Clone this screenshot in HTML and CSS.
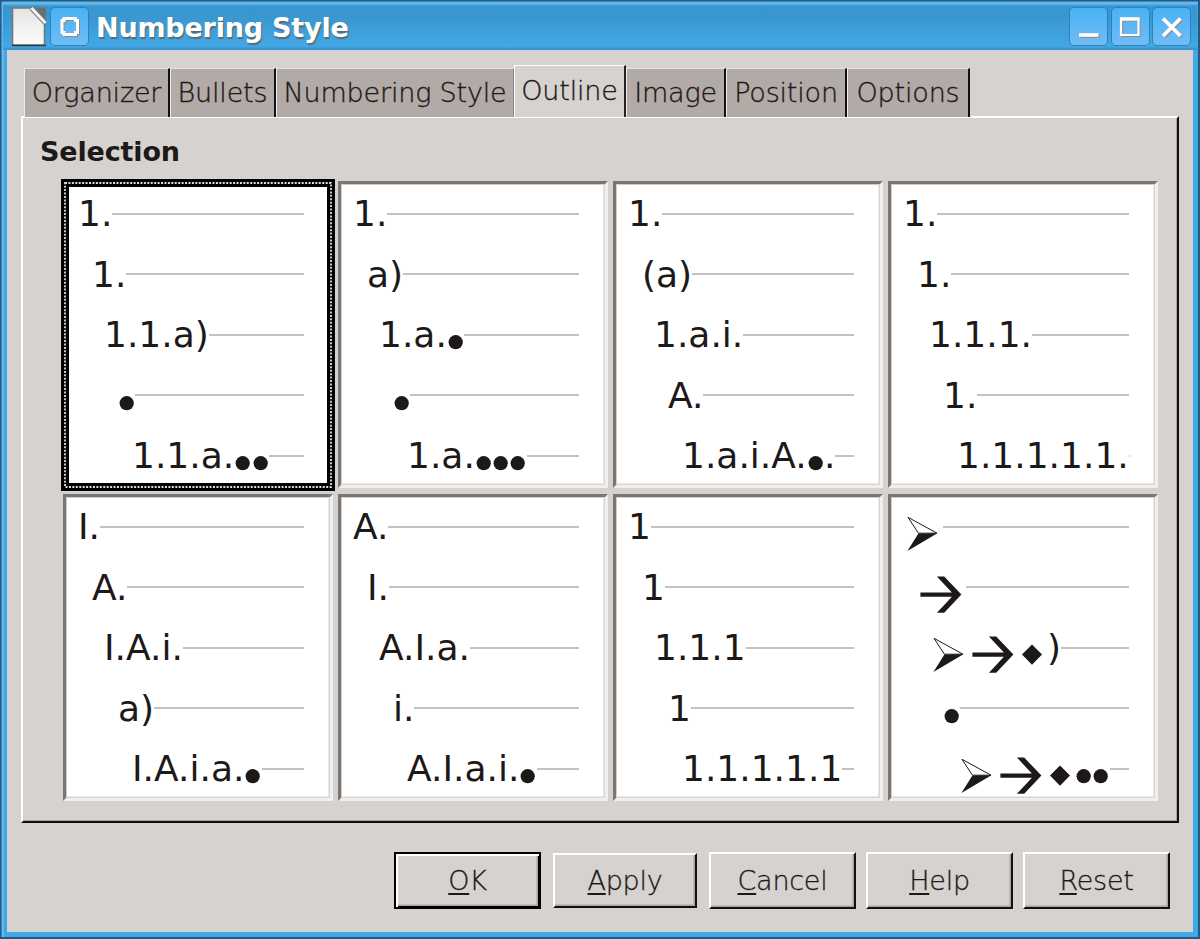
FILE: index.html
```
<!DOCTYPE html>
<html lang="en">
<head>
<meta charset="utf-8">
<title>Numbering Style</title>
<link rel="stylesheet" href="styles.css">
</head>
<body>
<svg class="defs" width="0" height="0">
  <defs>
    <symbol id="dot" viewBox="0 0 17.3 40"><circle cx="8.7" cy="28.2" r="7.1"/></symbol>
    <symbol id="head" viewBox="0 0 40 40"><path d="M5 11.3 15.4 27.200h18.600z" fill="#fff" stroke="#1d1918" stroke-width="1"/><path d="M15.400 27.500 34.400 27.300 4.400 45z"/></symbol>
    <symbol id="arrow" viewBox="0 0 48.5 40"><path d="M3.400 25.400h31.500L19.900 9.600h7.300L44.400 27.500 27.200 45.700h-7.300l15-15.900H3.400z"/></symbol>
    <symbol id="diamond" viewBox="0 0 29.5 40"><path d="M14 17.400 24 27.600 14 37.700 4 27.600z"/></symbol>
  </defs>
</svg>
<div class="window">
  <header class="titlebar">
    <svg class="doc" width="36" height="40" viewBox="0 0 36 40">
      <defs><linearGradient id="paper" x1="0" y1="0" x2="0" y2="1"><stop offset="0" stop-color="#e3e3e3"/><stop offset="1" stop-color="#fdfdfd"/></linearGradient></defs>
      <path d="M1.500 1h20l12 13v24h-32z" fill="url(#paper)" stroke="#777" stroke-width="1.600"/>
      <path d="M21 .500h14V15z" fill="#6d7072"/><path d="M20.500 1l14 15" stroke="#777" stroke-width="5"/><path d="M20.500 1l14 15" stroke="#f4f4f4" stroke-width="3"/><path d="M1 38.500h34" stroke="#3b3b3b" stroke-width="1.600"/>
    </svg>
    <span class="tb menu"><svg width="38" height="38" viewBox="0 0 38 38"><path d="M13 10.500h11.500v2h2v12h-2v2H13v-2h-2v-12h2z" fill="none" stroke="#fff" stroke-width="3"/></svg></span>
    <h1>Numbering Style</h1>
    <span class="controls">
      <span class="tb"><svg width="38" height="38" viewBox="0 0 38 38"><path d="M9 27h19.500" stroke="#fff" stroke-width="3.600"/></svg></span>
      <span class="tb"><svg width="38" height="38" viewBox="0 0 38 38" fill="none"><path d="M10 11h17.500v16H10z" stroke="#fff" stroke-width="2.200"/><path d="M9 11h19.500" stroke="#fff" stroke-width="3.500"/></svg></span>
      <span class="tb"><svg width="38" height="38" viewBox="0 0 38 38"><path d="M10 10.500l17.500 17.500M27.500 10.500L10 28" stroke="#fff" stroke-width="3.800"/></svg></span>
    </span>
  </header>
  <main class="dialog">
    <nav class="tabs">
      <span class="tab organizer">Organizer</span><span class="tab bullets">Bullets</span><span class="tab numbering">Numbering Style</span><span class="tab active">Outline</span><span class="tab image">Image</span><span class="tab position">Position</span><span class="tab options">Options</span>
    </nav>
    <section class="page">
      <h2>Selection</h2>
      <div class="grid" id="grid"></div>
    </section>
    <footer class="actions">
      <button class="btn default"><span><u>O</u>K</span></button>
      <button class="btn apply"><span><u>A</u>pply</span></button>
      <button class="btn"><span><u>C</u>ancel</span></button>
      <button class="btn"><span><u>H</u>elp</span></button>
      <button class="btn"><span><u>R</u>eset</span></button>
    </footer>
  </main>
</div>
<script src="outline.js"></script>
</body>
</html>
```
FILE: outline.js
```
// Symbol keys: * bullet, > arrowhead, - arrow, # diamond
const symbols = { '*': ['dot', 17.3], '>': ['head', 40], '-': ['arrow', 48.5], '#': ['diamond', 29.5] };
const outlines = [
  ['1.', '1.', '1.1.a)', '*', '1.1.a.**'],
  ['1.', 'a)', '1.a.*', '*', '1.a.***'],
  ['1.', '(a)', '1.a.i.', 'A.', '1.a.i.A.*.'],
  ['1.', '1.', '1.1.1.', '1.', '1.1.1.1.1.'],
  ['I.', 'A.', 'I.A.i.', 'a)', 'I.A.i.a.*'],
  ['A.', 'I.', 'A.I.a.', 'i.', 'A.I.a.i.*'],
  ['1', '1', '1.1.1', '1', '1.1.1.1.1'],
  ['>', '-', '>-#)', '*', '>-#**']
];
const draw = label => label.split(/([*>#-])/).filter(Boolean).map(part => {
  const s = symbols[part];
  return s ? `<svg class="sym" width="${s[1]}" height="40"><use href="#${s[0]}" width="${s[1]}" height="40"/></svg>` : `<span>${part}</span>`;
}).join('');
document.getElementById('grid').innerHTML = outlines.map((levels, i) =>
  `<div class="cell${i ? '' : ' selected'}">` +
  levels.map((l, n) => `<div class="level l${n + 1}">${draw(l)}<i class="rule"></i></div>`).join('') +
  (i ? '' : '<svg class="focus" width="275" height="312"><rect x="4" y="4" width="266" height="304"/><rect class="dots" x="4" y="4" width="266" height="304"/></svg>') +
  '</div>').join('');
```
FILE: styles.css
```
* { box-sizing: border-box; }
body { margin: 0; font-family: "DejaVu Sans", sans-serif; color: #1d1918; }
.defs { position: absolute; }
.window {
  width: 1200px; height: 939px; display: flex; flex-direction: column;
  padding: 0 7px 7px; background: #41a9e8; overflow: hidden;
  box-shadow: inset 1.5px 1.5px #205b80, inset -2px -2px #205b80, inset 4px 4px #62b8f2, inset -3px -3px #3da5e6;
}
.titlebar {
  height: 50px; margin: 0 -4px; padding: 7px 6px 0 8px; display: flex; align-items: flex-start; flex: none;
  background: linear-gradient(#205b80 0 1px, #61b6ee 2px 4px, #3a95cd 6px, #3a97d0 18px, #42a8e5 46px, #3690c9 50px);
}
.doc { margin-right: 3px; }
.tb {
  width: 39px; height: 39px; border: 1.5px solid #2b83bd; border-radius: 5px;
  background: linear-gradient(#48b2f5, #71bcf5); display: flex; align-items: center; justify-content: center;
}
.tb svg { flex: none; filter: drop-shadow(1.2px 1.2px 0 #8c8c8c); }
h1 { margin: 0 0 0 7px; font-size: 27px; line-height: 42px; color: #fff; text-shadow: 1px 1.5px 1px #5a6a78; letter-spacing: -.2px; }
.controls { display: flex; gap: 2.5px; margin-left: auto; }
.dialog { flex: 1; background: #d6d2cf; padding: 16px 14px 0; display: flex; flex-direction: column; }
.tabs { height: 51px; display: flex; align-items: flex-end; padding-left: 3px; position: relative; z-index: 1; }
.tab {
  height: 49px; border-top: 1.5px solid #e5e2df; border-left: 1.5px solid #eeebe9; border-right: 2.5px solid #111;
  background: #b2aaa6; font-size: 27px; font-weight: 200; line-height: 47px; text-align: center; white-space: nowrap;
  letter-spacing: -.18px; -webkit-text-stroke: .35px #1d1918;
}
.organizer { width: 146px; }
.bullets { width: 106px; }
.numbering { width: 238px; border-right: 1px solid #8b8481; }
.active { width: 112px; height: 52px; background: #d6d2cf; border-color: #fff #222 #fff #fff; line-height: 49px; }
.image { width: 100px; }
.position { width: 121px; }
.options { width: 123px; }
.page {
  height: 707px; margin-top: -1px; flex: none; border: 2px solid #fff; border-right: 2px solid #111; border-bottom: 2px solid #111;
  box-shadow: inset -1px -1px #aaa39f; padding: 16px 18px 0 17px;
}
h2 { margin: 0; font-size: 27px; line-height: 35px; letter-spacing: -.15px; }
.grid { display: grid; grid-template-columns: repeat(4, 270px); grid-auto-rows: 307px; gap: 6px 5px; margin: 12px 0 0 23px; }
.cell {
  position: relative; background: #fff; padding: 2px 26px 0 12px;
  border: 3px solid; border-color: #7c7673 #f1efed #f1efed #7c7673;
  box-shadow: inset -1.5px -1.5px #d9d5d2, inset 1px 1px #d0cdcb;
}
.level { height: 60.5px; display: flex; font-size: 36px; line-height: 56px; white-space: pre; }
.l1 { padding-left: 0; } .l2 { padding-left: 14px; } .l3 { padding-left: 26px; } .l4 { padding-left: 40px; } .l5 { padding-left: 54px; }
.rule { flex: 1; height: 2px; margin-top: 26.5px; background: #c2c2c2; }
.sym { flex: none; margin-top: 7px; overflow: visible; fill: #1d1918; }
.sym use, symbol { overflow: visible; }
.focus { position: absolute; left: -5px; top: -5px; fill: none; stroke: #000; stroke-width: 8px; }
.dots { stroke: #ddd; stroke-width: 1.8px; stroke-dasharray: 2 1.43; }
.actions { display: flex; align-items: flex-start; padding: 29px 0 0 373px; gap: 10px; }
.btn {
  width: 147px; height: 57px; flex: none; padding: 0; border: 2px solid; border-color: #fff #111 #111 #fff; background: #d6d2cf;
  box-shadow: inset -1.5px -1.5px #aaa39f; color: #1d1918; font: 200 27px "DejaVu Sans", sans-serif;
  letter-spacing: -.25px; -webkit-text-stroke: .3px #1d1918;
}
.default { border-color: #000; box-shadow: inset 2px 2px #fff, inset -1px -1px #000, inset -2.5px -2.5px #aaa39f; }
.apply { width: 144px; height: 55px; margin: 1px 2px 0; }
.btn u { text-decoration-thickness: 2px; text-underline-offset: 3px; text-decoration-skip-ink: none; }
```
